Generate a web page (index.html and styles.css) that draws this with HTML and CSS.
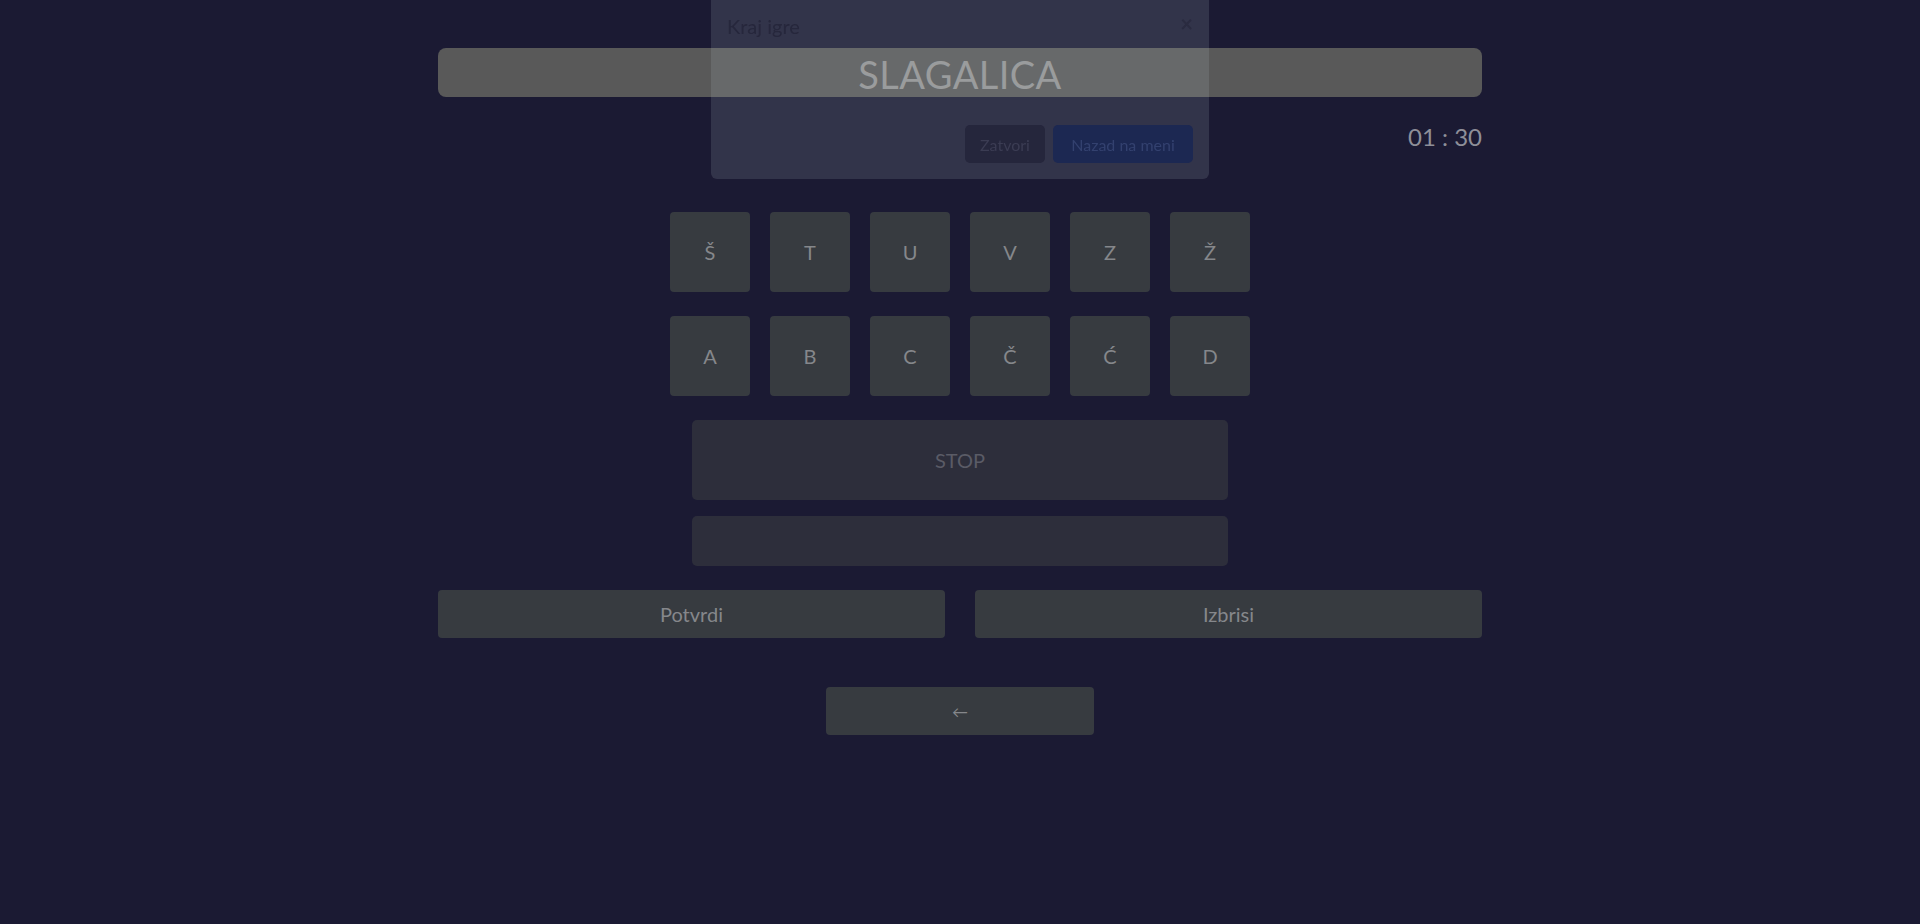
FILE: index.html
```html
<!DOCTYPE html>
<html lang="sr">
<head>
<meta charset="utf-8">
<title>Slagalica</title>
<link rel="stylesheet" href="styles.css">
</head>
<body>
<main class="page">
  <h1 class="title-bar">SLAGALICA</h1>
  <div class="timer">01 : 30</div>
  <div class="tiles">
    <button class="tile">Š</button>
    <button class="tile">T</button>
    <button class="tile">U</button>
    <button class="tile">V</button>
    <button class="tile">Z</button>
    <button class="tile">Ž</button>
    <button class="tile">A</button>
    <button class="tile">B</button>
    <button class="tile">C</button>
    <button class="tile">Č</button>
    <button class="tile">Ć</button>
    <button class="tile">D</button>
  </div>
  <button class="stop">STOP</button>
  <div class="word"></div>
  <div class="actions">
    <button class="action">Potvrdi</button>
    <button class="action">Izbrisi</button>
  </div>
  <button class="back">←</button>
</main>

<div class="modal">
  <div class="modal-header">
    <span class="modal-title">Kraj igre</span>
    <span class="modal-close">×</span>
  </div>
  <div class="modal-body"></div>
  <div class="modal-footer">
    <button class="btn btn-close">Zatvori</button>
    <button class="btn btn-menu">Nazad na meni</button>
  </div>
</div>
</body>
</html>
```

FILE: styles.css
```css
* { box-sizing: border-box; }

html, body {
  margin: 0;
  padding: 0;
  background: #1b1a33;
  font-family: Lato, "Noto Sans", sans-serif;
  height: 100%;
}

.page {
  width: 1044px;
  margin: 0 auto;
  padding-top: 48px;
  display: flex;
  flex-direction: column;
  align-items: center;
}

.title-bar {
  width: 100%;
  height: 49px;
  margin: 0;
  padding-top: 3px;
  background: #595959;
  border-radius: 8px;
  color: #949494;
  font-weight: 400;
  font-size: 38px;
  line-height: 46px;
  text-align: center;
  letter-spacing: 0.4px;
}

.timer {
  align-self: flex-end;
  margin-top: 26px;
  font-size: 24px;
  line-height: 28px;
  color: #8e8f99;
}

.tiles {
  margin-top: 61px;
  display: grid;
  grid-template-columns: repeat(6, 80px);
  grid-auto-rows: 80px;
  column-gap: 20px;
  row-gap: 24px;
}

button {
  font-family: inherit;
  border: none;
  padding: 0;
  cursor: pointer;
}

.tile {
  background: #373b40;
  border-radius: 4px;
  color: #85878b;
  font-size: 20px;
}

.stop {
  margin-top: 24px;
  width: 536px;
  height: 80px;
  background: #2d2e3b;
  border-radius: 5px;
  color: #5a5b66;
  font-size: 20px;
}

.word {
  margin-top: 16px;
  width: 536px;
  height: 50px;
  background: #2d2e3b;
  border-radius: 5px;
}

.actions {
  margin-top: 24px;
  width: 100%;
  display: flex;
  gap: 30px;
}

.action {
  flex: 1;
  height: 48px;
  background: #373b40;
  border-radius: 4px;
  color: #85878b;
  font-size: 20px;
}

.back {
  margin-top: 49px;
  width: 268px;
  height: 48px;
  background: #373b40;
  border-radius: 4px;
  color: #85878b;
  font-size: 16px;
}

/* modal overlay */
.modal {
  position: fixed;
  top: -6px;
  left: 50%;
  margin-left: -249px;
  width: 498px;
  height: 185px;
  background: rgba(187, 199, 211, 0.15);
  border-radius: 6px;
  display: flex;
  flex-direction: column;
}

.modal-header {
  height: 64px;
  padding: 17px 16px 0 16px;
  display: flex;
  justify-content: space-between;
  align-items: flex-start;
}

.modal-title {
  font-size: 20px;
  line-height: 30px;
  color: #26273c;
}

.modal-close {
  font-size: 22px;
  line-height: 26px;
  color: #2a2b40;
  margin-right: 0;
  font-weight: 700;
}

.modal-body {
  flex: 1;
}

.modal-footer {
  padding: 0 16px 16px 16px;
  display: flex;
  justify-content: flex-end;
  gap: 8px;
}

.btn {
  height: 38px;
  padding: 0 12px;
  border-radius: 5px;
  font-size: 16px;
}

.btn-close {
  width: 80px;
  background: #25263c;
  color: #3b3c53;
}

.btn-menu {
  width: 140px;
  background: #1c2852;
  color: #33416f;
}
```
